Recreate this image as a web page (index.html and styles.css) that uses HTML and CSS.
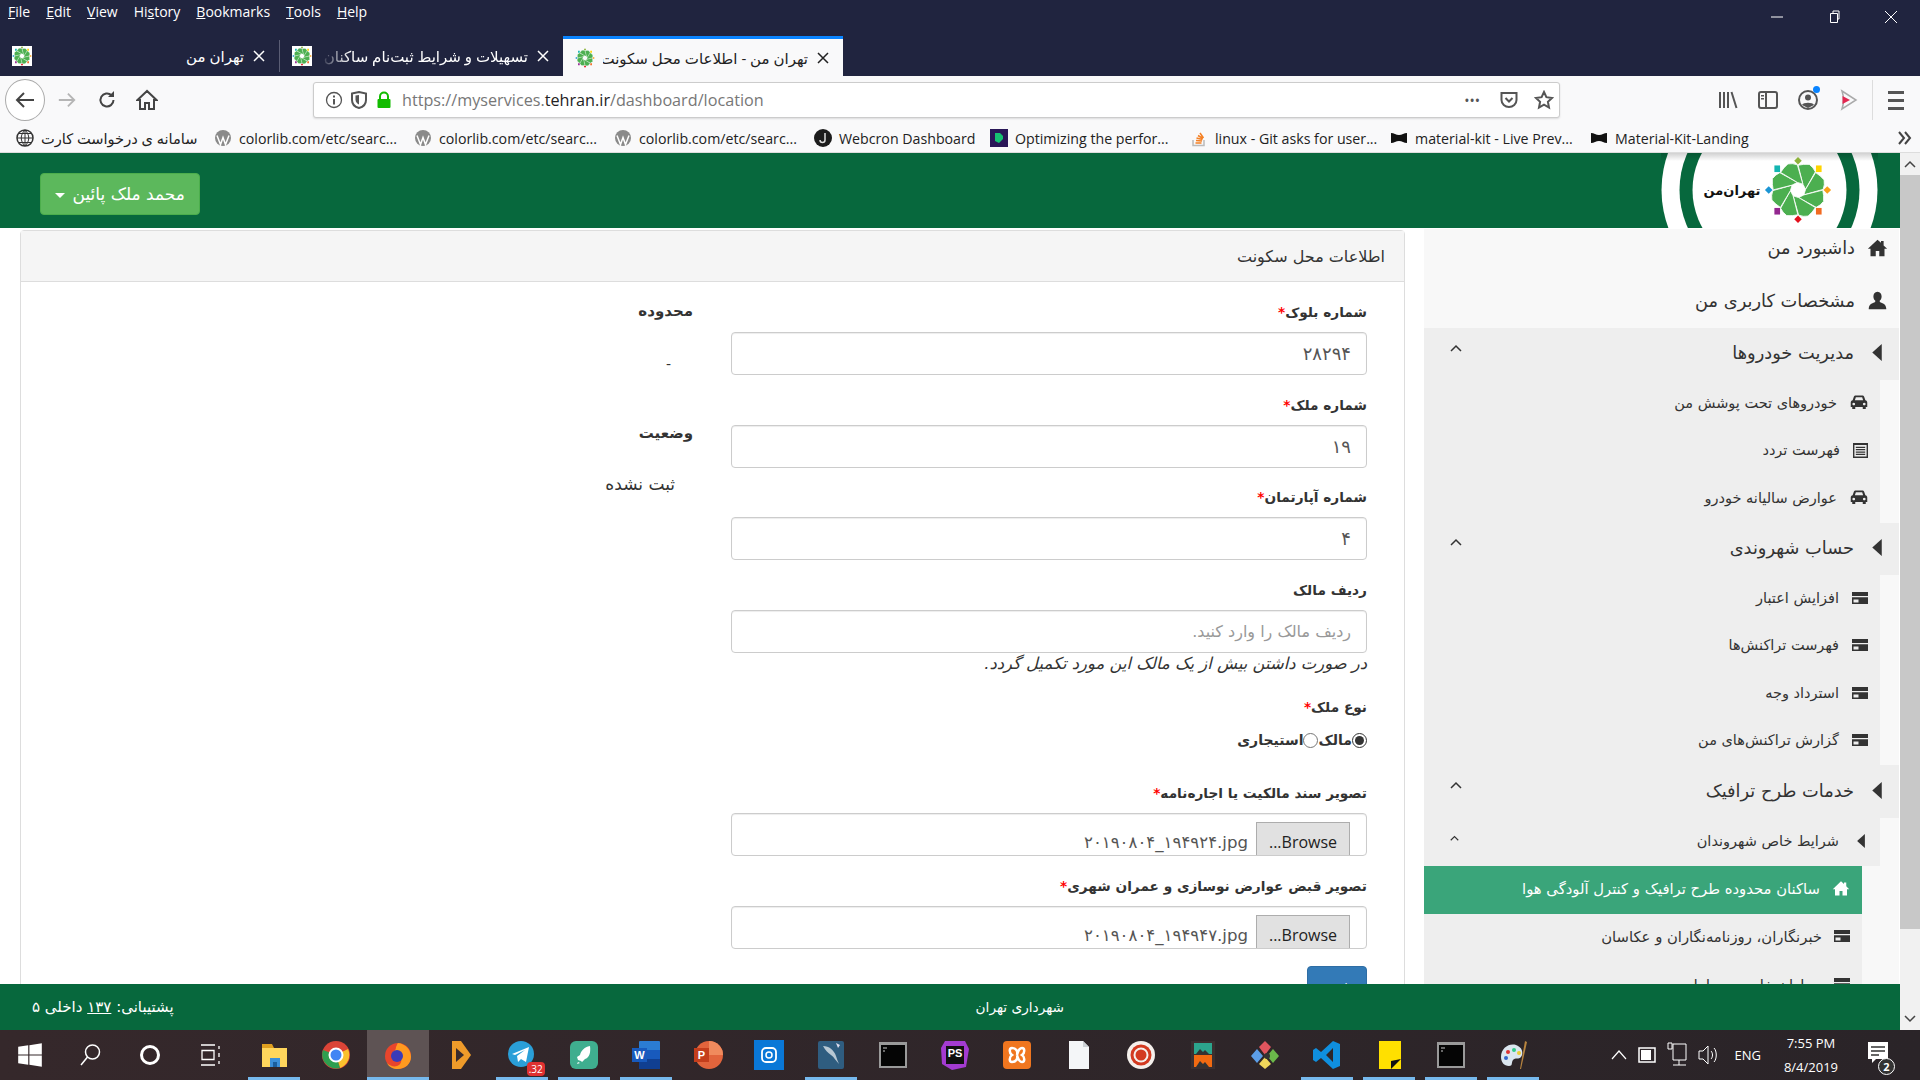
FILE: index.html
```html
<!DOCTYPE html>
<html lang="fa">
<head>
    <meta charset="UTF-8">
    <title>تهران من - اطلاعات محل سکونت</title>
    <link rel="stylesheet" href="styles.css">
</head>
<body>
    <svg class="sprite">
        <symbol id="i-home" viewBox="0 0 24 24"><path d="M12 3 1 13.500h3V22h6v-6h4v6h6v-8.500h3l-4-3.900V4.500h-3v2.200z"/></symbol>
        <symbol id="i-user" viewBox="0 0 24 24"><path d="M12 2C8.800 2 7.300 4.500 7.300 7.300c0 2 .9 3.700 2.100 4.800v1.600C6 15 2.300 16.200 2 21v1h20v-1c-.3-4.800-4-6-7.400-7.300v-1.600c1.200-1.100 2.100-2.800 2.100-4.800C16.700 4.500 15.200 2 12 2z"/></symbol>
        <symbol id="i-left" viewBox="0 0 10 18"><path d="M10 0v18L0 9z"/></symbol>
        <symbol id="i-up" viewBox="0 0 12 8"><path d="M1 7 6 2l5 5" fill="none" stroke="#333" stroke-width="1.500"/></symbol>
        <symbol id="i-car" viewBox="0 0 24 20"><path fill-rule="evenodd" d="M5 2.500C5.500 1 6.500.5 8 .5h8c1.500 0 2.500.5 3 2l1.500 4.500c1.500.5 2.500 1.500 2.500 3v6h-2v2.500h-4V16H7v2.500H3V16H1v-6c0-1.500 1-2.500 2.500-3zM6.500 7h11l-1.300-4H7.800zM5 10.200a1.800 1.800 0 1 0 .01 0zM19 10.200a1.800 1.800 0 1 0 .01 0z"/></symbol>
        <symbol id="i-list" viewBox="0 0 16 16"><path fill-rule="evenodd" d="M0 0h16v16H0zM1.500 2v12.500h13V2zM3 4h10v1.300H3zM3 6.500h10v1.300H3zM3 9h10v1.300H3zM3 11.500h10v1.300H3z"/></symbol>
        <symbol id="i-card" viewBox="0 0 16 12"><path fill-rule="evenodd" d="M0 0h16v12H0zM0 4v1.300h16V4zM1.500 7.500V10.500h5V7.500z"/></symbol>
        <g id="petal"><path d="M3-7.500-8-25Q-3-28 3-29.500 8-28 11.500-24L7.400-3.200z" fill="#4caf50" stroke="#fff" stroke-width=".8" stroke-linejoin="round"/></g>
        <symbol id="flower" viewBox="-36 -36 72 72">
            <g transform="rotate(18)">
                <use href="#petal"/><use href="#petal" transform="rotate(45)"/><use href="#petal" transform="rotate(90)"/><use href="#petal" transform="rotate(135)"/>
                <use href="#petal" transform="rotate(180)"/><use href="#petal" transform="rotate(225)"/><use href="#petal" transform="rotate(270)"/><use href="#petal" transform="rotate(315)"/>
            </g>
            <path fill="#8db33a" d="M0-35l4 4-4 4-4-4z"/>
            <path fill="#ffd400" d="M19-26h6v7h-6z"/>
            <path fill="#f9a01b" d="M31-4l4 4-4 4-4-4z"/>
            <path fill="#f26a21" d="M19 19h6v7h-6z"/>
            <path fill="#e3101c" d="M0 27l4 4-4 4-4-4z"/>
            <path fill="#93278f" d="M-25 19h6v7h-6z"/>
            <path fill="#1c95d4" d="M-31-4l4 4-4 4-4-4z"/>
            <path fill="#13b5b1" d="M-25-26h6v7h-6z"/>
        </symbol>
    </svg>

    <div class="titlebar">
        <div class="menu">
            <span><u>F</u>ile</span><span><u>E</u>dit</span><span><u>V</u>iew</span><span>Hi<u>s</u>tory</span><span><u>B</u>ookmarks</span><span><u>T</u>ools</span><span><u>H</u>elp</span>
        </div>
        <div class="win-controls">
            <svg width="14" height="14" viewBox="0 0 14 14"><path d="M1 7h12" stroke="#fff"/></svg>
            <svg width="14" height="14" viewBox="0 0 14 14"><path d="M3.500 3.500h7v9h-7zM6 3.500V1h6v8h-1.500" fill="none" stroke="#fff"/></svg>
            <svg width="14" height="14" viewBox="0 0 14 14"><path d="M1 1l12 12M13 1 1 13" stroke="#fff"/></svg>
        </div>
    </div>

    <div class="tabs">
        <div class="tab tab-first">
            <svg class="favicon"><use href="#flower"/></svg>
            <span class="tab-title" dir="rtl">تهران من</span>
            <svg class="tab-x" viewBox="0 0 14 14"><path d="M2 2l10 10M12 2 2 12"/></svg>
        </div>
        <div class="tab tab-second">
            <svg class="favicon"><use href="#flower"/></svg>
            <span class="tab-title fade" dir="rtl">تسهیلات و شرایط ثبت‌نام ساکنان</span>
            <svg class="tab-x" viewBox="0 0 14 14"><path d="M2 2l10 10M12 2 2 12"/></svg>
        </div>
        <div class="tab tab-active">
            <svg class="favicon"><use href="#flower"/></svg>
            <span class="tab-title" dir="rtl">تهران من - اطلاعات محل سکونت</span>
            <svg class="tab-x" viewBox="0 0 14 14"><path d="M2 2l10 10M12 2 2 12"/></svg>
        </div>
    </div>

    <div class="toolbar">
        <div class="back-btn">
            <svg width="22" height="22" viewBox="0 0 22 22"><path d="M20 11H3M10 4l-7 7 7 7" fill="none" stroke="#444" stroke-width="2"/></svg>
        </div>
        <div class="tool"><svg width="20" height="20" viewBox="0 0 22 22"><path d="M2 11h17M12 4l7 7-7 7" fill="none" stroke="#b5b5b5" stroke-width="2"/></svg></div>
        <div class="tool"><svg width="20" height="20" viewBox="0 0 20 20"><path d="M16.500 10a6.500 6.500 0 1 1-2-4.700" fill="none" stroke="#444" stroke-width="2"/><path d="M17 1v6h-6z" fill="#444"/></svg></div>
        <div class="tool"><svg width="22" height="22" viewBox="0 0 22 22"><path d="M11 2 1.500 11H4v9h5v-6h4v6h5v-9h2.500z" fill="none" stroke="#444" stroke-width="2"/></svg></div>
        <div class="urlbar">
            <svg class="url-ico" viewBox="0 0 18 18"><circle cx="9" cy="9" r="7.500" fill="none" stroke="#555" stroke-width="1.300"/><path d="M8 8h2v5.500H8zM8 4.500h2v2H8z" fill="#555"/></svg>
            <svg class="url-ico" viewBox="0 0 18 18"><path d="M2 2.500 9 1l7 1.500V9c0 4-3 7-7 8-4-1-7-4-7-8z" fill="none" stroke="#555" stroke-width="2"/><path d="M9 4v9.500C7 12.500 5.500 11 5.500 8.500V4.500z" fill="#555"/></svg>
            <svg class="url-ico" viewBox="0 0 18 18"><path d="M5 8V5.500a4 4 0 0 1 8 0V8" fill="none" stroke="#12bc00" stroke-width="2"/><rect x="2.500" y="8" width="13" height="9" rx="1" fill="#12bc00"/></svg>
            <div class="url-text">https://myservices.<b>tehran.ir</b>/dashboard/location</div>
            <div class="url-dots">•••</div>
            <svg class="url-end" viewBox="0 0 20 20"><path d="M2.500 3h15v7c0 4-3.500 7-7.500 7s-7.500-3-7.500-7z" fill="none" stroke="#555" stroke-width="2"/><path d="M6.500 8 10 11.500 13.500 8" fill="none" stroke="#555" stroke-width="2"/></svg>
            <svg class="url-end" viewBox="0 0 20 20"><path d="M10 2l2.400 5.200 5.600.7-4.100 3.900 1.100 5.700-5-2.800-5 2.800 1.100-5.700L2 7.900l5.600-.7z" fill="none" stroke="#555" stroke-width="2"/></svg>
        </div>
        <div class="tool-right">
            <svg width="22" height="22" viewBox="0 0 22 22"><path d="M3 3v16M7 3v16M11 3v16M14.500 3l5 16" fill="none" stroke="#555" stroke-width="2"/></svg>
            <svg width="22" height="22" viewBox="0 0 22 22"><rect x="2" y="3" width="18" height="16" rx="2" fill="none" stroke="#555" stroke-width="2"/><path d="M9 3v16" stroke="#555" stroke-width="2"/><path d="M4 6h3v1.500H4zM4 9h3v1.500H4z" fill="#555"/></svg>
            <div class="account">
                <svg width="22" height="22" viewBox="0 0 22 22"><circle cx="11" cy="11" r="9" fill="none" stroke="#555" stroke-width="2"/><circle cx="11" cy="8.500" r="3" fill="#555"/><path d="M5 16c1-3 11-3 12 0l-6 3z" fill="#555"/></svg>
                <span class="account-dot"></span>
            </div>
            <svg width="22" height="22" viewBox="0 0 22 22"><path d="M5 2 19 11 5 20c2-6 2-12 0-18z" fill="none" stroke="#aaa" stroke-width="1.500"/><path d="M5.500 7 13 11l-7.500 4z" fill="#e22850"/></svg>
        </div>
        <div class="tool-sep"></div>
        <div class="hamburger"><span></span><span></span><span></span></div>
    </div>

    <div class="bookmarks">
        <div class="bm"><svg viewBox="0 0 18 18"><circle cx="9" cy="9" r="8" fill="none" stroke="#333" stroke-width="1.500"/><path d="M1 9h16M9 1v16M3 4.500h12M3 13.500h12M9 1c-5 5-5 11 0 16M9 1c5 5 5 11 0 16" fill="none" stroke="#333"/></svg><span class="bm-fa" dir="rtl">سامانه ی درخواست کارت</span></div>
        <div class="bm"><svg viewBox="0 0 18 18"><circle cx="9" cy="9" r="8" fill="#8a8a8a"/><path d="M3 6.500l3.500 9 2.500-7 2.500 7 3.500-9" fill="none" stroke="#fff" stroke-width="1.500"/></svg><span>colorlib.com/etc/searc...</span></div>
        <div class="bm"><svg viewBox="0 0 18 18"><circle cx="9" cy="9" r="8" fill="#8a8a8a"/><path d="M3 6.500l3.500 9 2.500-7 2.500 7 3.500-9" fill="none" stroke="#fff" stroke-width="1.500"/></svg><span>colorlib.com/etc/searc...</span></div>
        <div class="bm"><svg viewBox="0 0 18 18"><circle cx="9" cy="9" r="8" fill="#8a8a8a"/><path d="M3 6.500l3.500 9 2.500-7 2.500 7 3.500-9" fill="none" stroke="#fff" stroke-width="1.500"/></svg><span>colorlib.com/etc/searc...</span></div>
        <div class="bm"><svg viewBox="0 0 18 18"><circle cx="9" cy="9" r="9" fill="#1c1c1c"/><path d="M11 4v7a2.500 2.500 0 0 1-5 0" fill="none" stroke="#ddd" stroke-width="1.500"/></svg><span>Webcron Dashboard</span></div>
        <div class="bm"><svg viewBox="0 0 18 18"><rect width="18" height="18" fill="#2a1758"/><path d="M5 4h5l3 3v3l-4 4-4-2z" fill="#16c172"/></svg><span>Optimizing the perfor...</span></div>
        <div class="bm"><svg viewBox="0 0 18 18"><path d="M3 11v5.500h11V11" fill="none" stroke="#bbb" stroke-width="1.500"/><path d="M5.500 14h6M6 11.500l6 .5M6.500 9l6 1.500M8 6.500l5 3M10 4l3.500 5" stroke="#f48024" stroke-width="1.500"/></svg><span>linux - Git asks for user...</span></div>
        <div class="bm"><svg viewBox="0 0 18 18"><path d="M1 4c3 0 5 2 8 2s5-2 8-2v10c-3 0-5-2-8-2s-5 2-8 2z" fill="#111"/></svg><span>material-kit - Live Prev...</span></div>
        <div class="bm"><svg viewBox="0 0 18 18"><path d="M1 4c3 0 5 2 8 2s5-2 8-2v10c-3 0-5-2-8-2s-5 2-8 2z" fill="#111"/></svg><span>Material-Kit-Landing</span></div>
        <svg class="bm-more" viewBox="0 0 18 18"><path d="M3 3l5 6-5 6M9 3l5 6-5 6" fill="none" stroke="#444" stroke-width="2"/></svg>
    </div>

    <div class="viewport">
        <div class="page" dir="rtl">
            <header class="site-head">
                <svg class="logo" viewBox="0 0 217 75">
                    <defs><linearGradient id="logo-shade" x1="0" y1="0" x2="0" y2="1"><stop offset="0" stop-color="#000" stop-opacity=".18"/><stop offset="1" stop-color="#000" stop-opacity="0"/></linearGradient></defs>
                    <circle cx="108.500" cy="37" r="108" fill="#fff"/>
                    <circle cx="108.500" cy="37" r="90" fill="#07683d"/>
                    <circle cx="108.500" cy="37" r="77" fill="#fff"/>
                    <rect width="217" height="8" fill="url(#logo-shade)"/>
                    <use href="#flower" x="103" y="3" width="68" height="68"/>
                    <text x="71" y="42" class="logo-text" text-anchor="middle">تهران‌من</text>
                </svg>
                <button class="user-btn">محمد ملک پائین <span class="caret"></span></button>
            </header>

            <div class="page-body">
                <aside class="sidebar">
                    <div class="side-top side-home"><svg class="ico-main"><use href="#i-home"/></svg>داشبورد من</div>
                    <div class="side-top side-user"><svg class="ico-main"><use href="#i-user"/></svg>مشخصات کاربری من</div>

                    <div class="side-head"><span class="side-label"><svg class="tri"><use href="#i-left"/></svg>مدیریت خودروها</span><svg class="chev"><use href="#i-up"/></svg></div>
                    <div class="side-sub">
                        <div class="sub-item"><svg class="ico-car"><use href="#i-car"/></svg>خودروهای تحت پوشش من</div>
                        <div class="sub-item"><svg class="ico-sm"><use href="#i-list"/></svg>فهرست تردد</div>
                        <div class="sub-item"><svg class="ico-car"><use href="#i-car"/></svg>عوارض سالیانه خودرو</div>
                    </div>

                    <div class="side-head"><span class="side-label"><svg class="tri"><use href="#i-left"/></svg>حساب شهروندی</span><svg class="chev"><use href="#i-up"/></svg></div>
                    <div class="side-sub">
                        <div class="sub-item"><svg class="ico-card"><use href="#i-card"/></svg>افزایش اعتبار</div>
                        <div class="sub-item"><svg class="ico-card"><use href="#i-card"/></svg>فهرست تراکنش‌ها</div>
                        <div class="sub-item"><svg class="ico-card"><use href="#i-card"/></svg>استرداد وجه</div>
                        <div class="sub-item"><svg class="ico-card"><use href="#i-card"/></svg>گزارش تراکنش‌های من</div>
                    </div>

                    <div class="side-head side-head-short"><span class="side-label"><svg class="tri"><use href="#i-left"/></svg>خدمات طرح ترافیک</span><svg class="chev"><use href="#i-up"/></svg></div>
                    <div class="side-sub">
                        <div class="sub-item sub-head"><span class="sub-label"><svg class="tri-sm"><use href="#i-left"/></svg>شرایط خاص شهروندان</span><svg class="chev-sm"><use href="#i-up"/></svg></div>
                        <div class="deep">
                            <div class="deep-item active"><svg class="ico-card"><use href="#i-home"/></svg>ساکنان محدوده طرح ترافیک و کنترل آلودگی هوا</div>
                            <div class="deep-item"><svg class="ico-card"><use href="#i-card"/></svg>خبرنگاران، روزنامه‌نگاران و عکاسان</div>
                            <div class="deep-item"><svg class="ico-card"><use href="#i-card"/></svg>بیماران خاص و معلولین</div>
                        </div>
                    </div>
                </aside>

                <main class="content">
                    <section class="panel">
                        <div class="panel-heading">اطلاعات محل سکونت</div>
                        <div class="panel-body">
                            <form class="form-col">
                                <div class="field">
                                    <label>شماره بلوک<span class="req">*</span></label>
                                    <div class="input">۲۸۲۹۴</div>
                                </div>
                                <div class="field">
                                    <label>شماره ملک<span class="req">*</span></label>
                                    <div class="input">۱۹</div>
                                </div>
                                <div class="field">
                                    <label>شماره آپارتمان<span class="req">*</span></label>
                                    <div class="input">۴</div>
                                </div>
                                <div class="field field-help">
                                    <label>ردیف مالک</label>
                                    <div class="input placeholder">ردیف مالک را وارد کنید.</div>
                                    <em class="help">در صورت داشتن بیش از یک مالک این مورد تکمیل گردد.</em>
                                </div>
                                <div class="field field-radio">
                                    <label>نوع ملک<span class="req">*</span></label>
                                    <div class="radios">
                                        <input type="radio" name="owner" checked><b>مالک</b><input type="radio" name="owner"><b>استیجاری</b>
                                    </div>
                                </div>
                                <div class="field">
                                    <label>تصویر سند مالکیت یا اجاره‌نامه<span class="req">*</span></label>
                                    <div class="input file"><span class="browse">Browse...</span><span class="fname" dir="ltr">۲۰۱۹۰۸۰۴_۱۹۴۹۲۴.jpg</span></div>
                                </div>
                                <div class="field">
                                    <label>تصویر قبض عوارض نوسازی و عمران شهری<span class="req">*</span></label>
                                    <div class="input file"><span class="browse">Browse...</span><span class="fname" dir="ltr">۲۰۱۹۰۸۰۴_۱۹۴۹۴۷.jpg</span></div>
                                </div>
                                <button type="button" class="submit">ثبت</button>
                            </form>
                            <div class="info-col">
                                <div class="info-block">
                                    <label>محدوده</label>
                                    <p class="info-dash">-</p>
                                </div>
                                <div class="info-block">
                                    <label>وضعیت</label>
                                    <p class="info-val">ثبت نشده</p>
                                </div>
                            </div>
                        </div>
                    </section>
                </main>
            </div>

            <footer class="site-foot">
                <span class="foot-center">شهرداری تهران</span>
                <span>پشتیبانی: <u>۱۳۷</u> داخلی ۵</span>
            </footer>
        </div>
        <div class="scrollbar">
            <svg viewBox="0 0 20 22"><path d="M5 14l5-5 5 5" fill="none" stroke="#444" stroke-width="1.500"/></svg>
            <div class="thumb"></div>
            <svg viewBox="0 0 20 22"><path d="M5 8l5 5 5-5" fill="none" stroke="#444" stroke-width="1.500"/></svg>
        </div>
    </div>

    <div class="taskbar">
        <div class="tb-sys"><svg width="26" height="26" viewBox="0 0 22 22"><path d="M1 4l8.500-1.200V10.500H1zM10.500 2.700 21 1v9.500H10.500zM1 11.500h8.500v7.700L1 18zM10.500 11.500H21V21l-10.500-1.700z" fill="#fff"/></svg></div>
        <div class="tb-sys"><svg width="24" height="24" viewBox="0 0 24 24"><circle cx="14.500" cy="9" r="7" fill="none" stroke="#fff" stroke-width="1.500"/><path d="M9.500 14 3 22" stroke="#fff" stroke-width="1.500"/></svg></div>
        <div class="tb-sys"><svg width="24" height="24" viewBox="0 0 24 24"><circle cx="12" cy="12" r="8.500" fill="none" stroke="#fff" stroke-width="3"/></svg></div>
        <div class="tb-sys"><svg width="22" height="22" viewBox="0 0 22 22"><path d="M2 1h14M2 21h14M3 6.500h12v9H3zM20 2v3M20 9v4M20 17v3" fill="none" stroke="#fff" stroke-width="1.300"/></svg></div>
        <div class="tb-app run-part"><svg viewBox="0 0 30 30"><path d="M3 4h10l2 4H3z" fill="#e0a020"/><path d="M3 8h25v19H3z" fill="#ffd65c"/><path d="M11 18h10v9H11z" fill="#3b8fd9"/><path d="M14 22h4v5h-4z" fill="#1b5f9e"/></svg></div>
        <div class="tb-app"><svg viewBox="0 0 30 30"><circle cx="15" cy="15" r="14" fill="#db4437"/><path d="M15 15 27 9a14 14 0 0 1-8 19z" fill="#fbc02d"/><path d="M15 15 19 28A14 14 0 0 1 2 10z" fill="#2e9e4f"/><circle cx="15" cy="15" r="6.500" fill="#4285f4" stroke="#fff" stroke-width="2"/></svg></div>
        <div class="tb-app tb-open"><svg viewBox="0 0 30 30"><circle cx="15" cy="16" r="13" fill="#e8452c"/><path d="M15 3c8 1 13 7 13 14 0 7-6 12-13 12-5 0-9-2-11-6 3 3 7 4 10 3 3-1 5-4 4-7-1-3-4-3-6-2 1-2 0-4-2-5 2-1 3-3 3-5 1-2 1-3 2-4z" fill="#ff9a1f"/><circle cx="14" cy="16" r="6" fill="#3b3bb8"/></svg></div>
        <div class="tb-app"><svg viewBox="0 0 30 30"><path d="M7 1h9l10 14-10 14H7z" fill="#ef9b2a"/><path d="M11 8l8 7-8 7z" fill="#3a2b2c"/></svg></div>
        <div class="tb-app run"><svg viewBox="0 0 30 30"><circle cx="14" cy="14" r="13" fill="#2a9fd8"/><path d="M5 14 22 7l-3 15-5-3-3 3-1-6 8-6-10 5z" fill="#fff"/></svg><span class="tb-badge">.32</span></div>
        <div class="tb-app run"><svg viewBox="0 0 30 30"><rect x="1" y="1" width="28" height="28" rx="6" fill="#3fae8f"/><path d="M21 6c-6 1-9 5-10 9l-3 2 1 3 3 1 1 1 3-3c4-1 6-6 5-13zM9 22l-1 2 3-1z" fill="#fff"/></svg></div>
        <div class="tb-app run"><svg viewBox="0 0 30 30"><rect x="8" y="1" width="21" height="28" rx="1" fill="#2b7cd3"/><path d="M8 10h21v9H8z" fill="#185abd"/><path d="M8 19h21v10H8z" fill="#103f91"/><rect x="1" y="8" width="15" height="14" fill="#185abd"/><text x="8.500" y="19" class="tb-letter" text-anchor="middle">W</text></svg></div>
        <div class="tb-app"><svg viewBox="0 0 30 30"><circle cx="16" cy="15" r="14" fill="#e2643c"/><path d="M16 1a14 14 0 0 1 14 14H16z" fill="#f08a5d"/><rect x="1" y="8" width="15" height="14" fill="#c43e1c"/><text x="8.500" y="19" class="tb-letter" text-anchor="middle">P</text></svg></div>
        <div class="tb-app"><svg viewBox="0 0 30 30"><rect width="30" height="30" fill="#0a78d7"/><rect x="8" y="8" width="14" height="14" rx="4" fill="none" stroke="#fff" stroke-width="1.800"/><circle cx="15" cy="15" r="3" fill="none" stroke="#fff" stroke-width="1.500"/></svg></div>
        <div class="tb-app run"><svg viewBox="0 0 30 30"><rect x="2" y="1" width="26" height="28" rx="2" fill="#2f5d80"/><path d="M7 6c6 0 11 4 13 10 1 3 2 6 3 8-3-3-5-7-8-9-3-2-6-5-8-9z" fill="#b8c8d4"/><path d="M20 3l4 2-2 3z" fill="#dde"/></svg></div>
        <div class="tb-app"><svg viewBox="0 0 30 30"><rect x="1" y="2" width="28" height="26" fill="#9a9a9a"/><rect x="3" y="5" width="24" height="21" fill="#050505"/><path d="M5 8h4M5 11h2" stroke="#ccc"/></svg></div>
        <div class="tb-app"><svg viewBox="0 0 30 30"><path d="M5 1h20l4 8-3 18-14 3L2 24 1 8z" fill="#a33bd1"/><rect x="6" y="6" width="18" height="18" fill="#111"/><text x="15" y="17" class="tb-letter" text-anchor="middle">PS</text></svg></div>
        <div class="tb-app"><svg viewBox="0 0 30 30"><rect x="1" y="1" width="28" height="28" rx="4" fill="#f0761f"/><path d="M10 8c4 0 6 3 5 7 1-4 3-7 5-7 3 0 3 5 0 7 3 2 3 7 0 7-2 0-4-3-5-7 1 4-1 7-5 7-3 0-3-5 0-7-3-2-3-7 0-7z" fill="none" stroke="#fff" stroke-width="2.500"/></svg></div>
        <div class="tb-app"><svg viewBox="0 0 30 30"><path d="M5 1h14l6 6v22H5z" fill="#f4f6f8"/><path d="M19 1v6h6z" fill="#cdd2d6"/></svg></div>
        <div class="tb-app"><svg viewBox="0 0 30 30"><circle cx="15" cy="15" r="14" fill="#f5f0ec"/><circle cx="15" cy="15" r="10.500" fill="#d33a20"/><circle cx="15" cy="15" r="7.500" fill="#f5f0ec"/><circle cx="15" cy="15" r="5.500" fill="#d33a20"/></svg></div>
        <div class="tb-app"><svg viewBox="0 0 30 30"><rect x="3" y="1" width="24" height="28" fill="#3a2f30"/><rect x="6" y="3" width="18" height="11" fill="#2ca58d"/><rect x="6" y="15" width="18" height="12" fill="#f26a11"/><path d="M8 14l4-5 3 3 2-2 4 4zM8 27l4-6 3 3 2-2 4 5z" fill="#333"/></svg></div>
        <div class="tb-app"><svg viewBox="0 0 30 30"><path d="M15 1l6 6-6 8-6-8z" fill="#e0555e"/><path d="M7 9l6 7-6 7-6-7z" fill="#5c9ee8"/><path d="M23 9l6 7-6 7-6-7z" fill="#6bb84a"/><path d="M15 17l6 7-6 5-6-5z" fill="#f0d75a"/><circle cx="17" cy="16" r="3" fill="#333"/></svg></div>
        <div class="tb-app run"><svg viewBox="0 0 30 30"><path d="M21 1 28 4v22l-7 3-12-11-5 4-3-2V10l3-2 5 4zM21 8l-7 7 7 7z" fill="#0f8fdf"/></svg></div>
        <div class="tb-app run-part"><svg viewBox="0 0 30 30"><path d="M5 1h22v28H5z" fill="#ffe000"/><path d="M17 21l10-2-10 10z" fill="#111"/></svg></div>
        <div class="tb-app run"><svg viewBox="0 0 30 30"><rect x="1" y="2" width="28" height="26" fill="#9a9a9a"/><rect x="3" y="5" width="24" height="21" fill="#050505"/><path d="M5 8h4M5 11h2" stroke="#ccc"/></svg></div>
        <div class="tb-app run"><svg viewBox="0 0 30 30"><path d="M3 17C3 8 11 3 18 5c6 2 8 8 5 12-2 3-6 0-8 3-2 3 0 6-4 6-5 0-8-4-8-9z" fill="#dbe6ef"/><circle cx="10" cy="12" r="2" fill="#d33"/><circle cx="16" cy="10" r="2" fill="#3c8"/><circle cx="8" cy="18" r="2" fill="#36c"/><circle cx="21" cy="13" r="2" fill="#ec3"/><path d="M27 1l2 1-6 27h-1z" fill="#b9853f"/></svg></div>
        <div class="tray">
            <svg width="16" height="10" viewBox="0 0 16 10"><path d="M1 9l7-8 7 8" fill="none" stroke="#fff" stroke-width="1.200"/></svg>
            <svg width="18" height="16" viewBox="0 0 18 16"><rect x="1" y="1" width="16" height="14" fill="none" stroke="#fff" stroke-width="1.500"/><rect x="3" y="3" width="10" height="10" fill="#fff"/></svg>
            <svg width="20" height="26" viewBox="0 0 20 26"><path d="M6 2h13v16H6zM1 1h4v6H1zM12 18v5M6 23h13" fill="none" stroke="#fff"/></svg>
            <svg width="20" height="24" viewBox="0 0 20 24"><path d="M1 8h4l5-5v18l-5-5H1zM13 8c2 2 2 6 0 8M16 5c3 3 3 11 0 14" fill="none" stroke="#fff"/></svg>
            <span class="tray-lang">ENG</span>
            <div class="clock"><span>7:55 PM</span><span>8/4/2019</span></div>
            <div class="notif">
                <svg width="22" height="24" viewBox="0 0 22 24"><path d="M1 1h20v17H9l-4 4v-4H1z" fill="#fff"/><path d="M4 6h14M4 10h14M4 14h8" stroke="#333" stroke-width="1.300"/></svg>
                <span class="notif-num">2</span>
            </div>
        </div>
    </div>
</body>
</html>
```

FILE: styles.css
```css
* {
    margin: 0;
    padding: 0;
    box-sizing: border-box;
}

html, body {
    height: 1080px;
    overflow: hidden;
}

body {
    display: flex;
    flex-direction: column;
    font-family: "Open Sans", "DejaVu Sans", sans-serif;
    background-color: #fff;
    color: #333;
}

.sprite {
    display: none;
}

/* browser window */
.titlebar {
    height: 36px;
    flex: none;
    display: flex;
    justify-content: space-between;
    background-color: #20243f;
    color: #fff;
    font-size: 14px;
}

.menu {
    display: flex;
    gap: 16px;
    padding: 2px 0 0 8px;
}

.win-controls {
    display: flex;
    gap: 43px;
    padding: 10px 22px 0 0;
    height: 24px;
}

.tabs {
    height: 40px;
    flex: none;
    display: flex;
    background-color: #20243f;
    color: #fff;
    font-size: 15px;
}

.tab {
    display: flex;
    align-items: center;
    padding: 0 13px 0 12px;
}

.tab-first {
    width: 280px;
    border-right: 1px solid #5a5d74;
    margin: 4px 0;
}

.tab-second {
    width: 283px;
}

.tab-active {
    width: 280px;
    background-color: #f9f9fa;
    border-top: 3px solid #0a84ff;
    color: #222;
}

.favicon {
    width: 20px;
    height: 20px;
    flex: none;
}

.tab-first .favicon,
.tab-second .favicon {
    background-color: #fff;
}

.tab-title {
    flex: 1;
    min-width: 0;
    margin: 0 8px;
    overflow: hidden;
    white-space: nowrap;
}

.fade {
    mask-image: linear-gradient(90deg, transparent, #000 30px);
}

.tab-x {
    width: 14px;
    height: 14px;
    flex: none;
    stroke: #fff;
    stroke-width: 1.500;
}

.tab-active .tab-x {
    stroke: #222;
}

.toolbar {
    height: 48px;
    flex: none;
    display: flex;
    align-items: center;
    background-color: #f9f9fa;
}

.back-btn {
    width: 40px;
    height: 42px;
    margin: 0 2px 0 5px;
    display: flex;
    align-items: center;
    justify-content: center;
    background-color: #fff;
    border: 1px solid #aaa;
    border-radius: 50%;
}

.tool {
    width: 40px;
    display: flex;
    justify-content: center;
}

.urlbar {
    width: 1247px;
    height: 36px;
    margin-left: 146px;
    display: flex;
    align-items: center;
    background-color: #fff;
    border: 1px solid #ccc;
    border-radius: 3px;
    box-shadow: 0 1px 2px rgba(0, 0, 0, 0.12);
    padding: 0 5px 0 11px;
}

.url-ico {
    width: 18px;
    height: 18px;
    margin-right: 7px;
    flex: none;
}

.url-text {
    flex: 1;
    padding-left: 2px;
    color: #777;
    font-size: 16.200px;
    white-space: nowrap;
}

.url-text b {
    color: #222;
    font-weight: 400;
}

.url-dots {
    margin-right: 4px;
    color: #555;
    font-size: 14px;
}

.url-end {
    width: 20px;
    height: 20px;
    margin-left: 15px;
}

.tool-right {
    display: flex;
    gap: 18px;
    margin-left: 157px;
}

.account {
    position: relative;
    height: 22px;
}

.account-dot {
    position: absolute;
    top: -3px;
    right: -1px;
    width: 7px;
    height: 7px;
    border-radius: 50%;
    background-color: #0a84ff;
}

.tool-sep {
    width: 1px;
    height: 40px;
    margin-left: 13px;
    background-color: #ddd;
}

.hamburger {
    display: flex;
    flex-direction: column;
    gap: 5px;
    margin-left: 15px;
}

.hamburger span {
    display: block;
    width: 16px;
    height: 3px;
    background-color: #555;
}

.bookmarks {
    height: 29px;
    flex: none;
    display: flex;
    align-items: center;
    padding-left: 16px;
    background-color: #f9f9fa;
    border-bottom: 1px solid #ddd;
    font-size: 14.200px;
    color: #222;
}

.bm {
    width: 200px;
    flex: none;
    display: flex;
    align-items: center;
    gap: 7px;
    white-space: nowrap;
}

.bm:nth-child(1) {
    width: 198px;
}

.bm:nth-child(5) {
    width: 176px;
}

.bm-fa {
    font-size: 14.600px;
}

.bm svg {
    width: 18px;
    height: 18px;
    flex: none;
}

.bm-more {
    width: 18px;
    height: 18px;
    margin-left: auto;
    margin-right: 6px;
}

/* page */
.viewport {
    height: 877px;
    flex: none;
    display: flex;
}

.page {
    width: 1900px;
    display: flex;
    flex-direction: column;
    font-family: "DejaVu Sans", sans-serif;
    font-size: 14px;
}

.site-head {
    height: 75px;
    flex: none;
    display: flex;
    justify-content: space-between;
    align-items: center;
    background-color: #07683d;
    padding-left: 40px;
}

.logo {
    width: 217px;
    height: 75px;
    margin-right: 22px;
}

.logo-text {
    font-family: "DejaVu Sans", sans-serif;
    font-size: 13px;
    font-weight: 700;
    fill: #111;
}

.user-btn {
    width: 160px;
    height: 42px;
    margin-top: 7px;
    background-color: #5cb85c;
    border: 1px solid #4cae4c;
    border-radius: 4px;
    color: #fff;
    font-family: "DejaVu Sans", sans-serif;
    font-size: 17px;
}

.caret {
    display: inline-block;
    margin-right: 2px;
    vertical-align: middle;
    border-top: 5px solid #fff;
    border-left: 5px solid transparent;
    border-right: 5px solid transparent;
}

.page-body {
    flex: 1;
    min-height: 0;
    display: flex;
    overflow: hidden;
}

/* sidebar */
.sidebar {
    width: 475px;
    flex: none;
    background-color: #f8f8f8;
    color: #333;
    margin: 1px 1px 0 0;
    align-self: flex-start;
}

.side-top {
    display: flex;
    align-items: center;
    gap: 12px;
    padding: 0 11px 3px 0;
    font-size: 17.800px;
}

.side-home {
    height: 40px;
}

.side-user {
    height: 59px;
    padding-top: 7px;
}

.ico-main {
    width: 21px;
    height: 21px;
    flex: none;
    fill: #333;
}

.side-head {
    height: 52px;
    display: flex;
    justify-content: space-between;
    align-items: center;
    padding: 0 17px 3px 26px;
    background-color: #eee;
    font-size: 17.800px;
}

.side-head-short {
    height: 53px;
}

.side-label {
    display: flex;
    align-items: center;
    gap: 18px;
}

.tri {
    width: 10px;
    height: 17px;
    flex: none;
    fill: #333;
}

.chev {
    width: 12px;
    height: 8px;
    margin-bottom: 10px;
}

.side-sub {
    padding-right: 19px;
}

.sub-item {
    height: 47.600px;
    display: flex;
    align-items: center;
    gap: 13px;
    padding-bottom: 2px;
    background-color: #eee;
    font-size: 14.500px;
}

.sub-item > svg:first-child {
    margin-right: 12px;
}

.ico-car {
    width: 18px;
    height: 15px;
    flex: none;
    fill: #333;
}

.ico-sm {
    width: 15px;
    height: 15px;
    flex: none;
    fill: #333;
}

.ico-card {
    width: 16px;
    height: 12px;
    flex: none;
    fill: #333;
}

.sub-head {
    justify-content: space-between;
    padding: 0 15px 2px 26px;
}

.sub-label {
    display: flex;
    align-items: center;
    gap: 18px;
}

.tri-sm {
    width: 8px;
    height: 14px;
    flex: none;
    fill: #333;
}

.chev-sm {
    width: 9px;
    height: 6px;
    margin-bottom: 6px;
}

.deep {
    padding-right: 18px;
}

.deep-item {
    height: 48px;
    display: flex;
    align-items: center;
    gap: 12px;
    padding: 0 12px 3px 0;
    background-color: #eee;
    font-size: 14.800px;
}

.deep-item.active {
    background-color: #3aa57a;
    color: #fff;
}

.deep-item.active svg {
    fill: #fff;
    width: 18px;
    height: 18px;
}

/* main column */
.content {
    flex: 1;
    min-width: 0;
    padding: 2px 19px 0 20px;
    background-color: #fff;
}

.panel {
    border: 1px solid #ddd;
    border-radius: 4px;
}

.panel-heading {
    height: 51px;
    display: flex;
    align-items: center;
    padding-right: 19px;
    background-color: #f5f5f5;
    border-bottom: 1px solid #ddd;
    font-size: 16px;
    color: #333;
}

.panel-body {
    display: flex;
    gap: 38px;
    padding: 20px 37px 0 0;
}

.form-col {
    width: 636px;
    flex: none;
}

.field {
    height: 92.500px;
}

.field label {
    display: block;
    height: 20px;
    line-height: 20px;
    margin-bottom: 10px;
    font-weight: 700;
    font-size: 13.700px;
}

.req {
    color: #f00;
}

.input {
    height: 43px;
    display: flex;
    align-items: center;
    padding: 0 15px;
    background-color: #fff;
    border: 1px solid #ccc;
    border-radius: 4px;
    box-shadow: inset 0 1px 1px rgba(0, 0, 0, 0.075);
    color: #555;
    font-size: 18px;
}

.placeholder {
    color: #999;
    font-size: 16px;
}

.help {
    display: block;
    margin-top: 1px;
    font-size: 16.400px;
    line-height: 20px;
    color: #333;
    white-space: nowrap;
}

.field-help {
    height: 117.500px;
}

.field-radio {
    height: 86px;
}

.field-radio label {
    margin-bottom: 13px;
}

.radios {
    display: flex;
    align-items: center;
    height: 20px;
    font-size: 14px;
}

.radios input {
    width: 15px;
    height: 15px;
    accent-color: #333;
    flex: none;
}

.file {
    overflow: hidden;
    align-items: flex-start;
    gap: 8px;
    padding: 8px 16px 0 0;
}

.browse {
    width: 94px;
    height: 42px;
    flex: none;
    padding-top: 8px;
    text-align: center;
    background-color: #e1e1e1;
    border: 1px solid #adadad;
    font-family: "Open Sans", sans-serif;
    font-size: 16px;
    color: #222;
}

.fname {
    padding-top: 11px;
    font-size: 16.600px;
}

.submit {
    display: block;
    width: 60px;
    height: 42px;
    margin-top: -2px;
    background-color: #337ab7;
    border: 1px solid #2e6da4;
    border-radius: 4px;
    color: #fff;
    font-family: "DejaVu Sans", sans-serif;
    font-size: 14px;
}

.info-col {
    flex: 1;
}

.info-block label {
    display: block;
    font-weight: 700;
    font-size: 15px;
}

.info-block:first-child {
    height: 122px;
}

.info-dash {
    margin: 36px 22px 0 0;
}

.info-val {
    margin: 32px 18px 0 0;
    font-size: 17px;
}

.site-foot {
    height: 46px;
    flex: none;
    display: flex;
    justify-content: space-between;
    align-items: center;
    padding: 0 836px 0 32px;
    background-color: #07683d;
    color: #fff;
    font-size: 15px;
}

.foot-center {
    font-size: 13.700px;
}

/* fake page scrollbar */
.scrollbar {
    width: 20px;
    flex: none;
    display: flex;
    flex-direction: column;
    background-color: #f1f1f1;
}

.scrollbar svg {
    width: 20px;
    height: 22px;
    flex: none;
}

.thumb {
    height: 754px;
    margin-bottom: auto;
    background-color: #c8c8c8;
}

/* windows taskbar */
.taskbar {
    height: 50px;
    flex: none;
    display: flex;
    background: linear-gradient(90deg, #35282b, #2a2428);
}

.tb-sys {
    width: 60px;
    flex: none;
    display: flex;
    align-items: center;
    justify-content: center;
}

.tb-app {
    position: relative;
    width: 61.950px;
    flex: none;
    display: flex;
    align-items: center;
    justify-content: center;
}

.tb-app:nth-child(5) {
    margin-left: 3px;
}

.tb-app svg {
    width: 30px;
    height: 30px;
}

.tb-open {
    background-color: #5e5354;
}

.tb-open::after,
.run::after,
.run-part::after {
    content: "";
    position: absolute;
    left: 5px;
    right: 5px;
    bottom: 0;
    height: 3px;
    background-color: #76b9ed;
}

.tb-open::after {
    left: 0;
    right: 0;
}

.tb-badge {
    position: absolute;
    right: 8px;
    bottom: 4px;
    padding: 0 2px;
    background-color: #e03131;
    border-radius: 4px;
    color: #fff;
    font-size: 10px;
    line-height: 14px;
}

.tb-letter {
    font-family: "Liberation Sans", sans-serif;
    font-size: 11px;
    font-weight: 700;
    fill: #fff;
}

.tray {
    display: flex;
    align-items: center;
    gap: 11px;
    margin-left: auto;
    padding-right: 31px;
    color: #fff;
}

.tray-lang {
    font-size: 13px;
    margin-left: 6px;
}

.clock {
    display: flex;
    flex-direction: column;
    align-items: center;
    gap: 6px;
    width: 84px;
    margin: 0 3px 0 -3px;
    font-size: 13px;
}

.notif {
    position: relative;
}

.notif-num {
    position: absolute;
    right: -6px;
    bottom: -5px;
    width: 17px;
    height: 17px;
    border: 1px solid #fff;
    border-radius: 50%;
    background-color: #333;
    font-size: 11px;
    line-height: 15px;
    font-weight: 700;
    text-align: center;
}
```
